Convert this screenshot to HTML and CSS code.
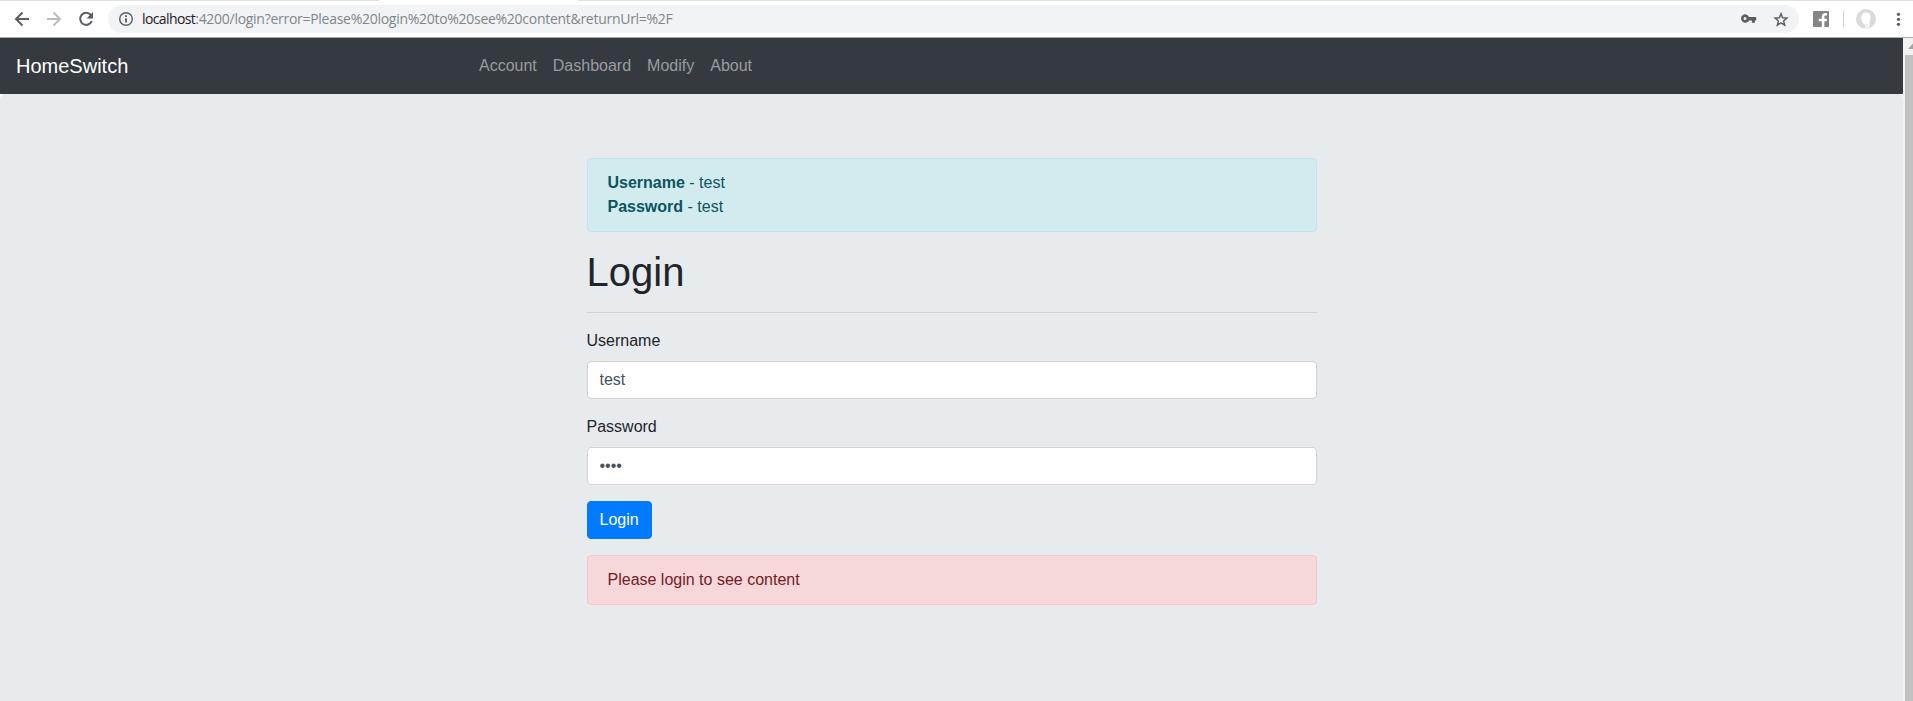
FILE: index.html
```html
<!DOCTYPE html>
<html lang="en">
<head>
<meta charset="utf-8">
<title>HomeSwitch</title>
<link rel="stylesheet" href="styles.css">
</head>
<body>
<header class="toolbar">
  <svg class="tool-icons" width="108" height="37" viewBox="0 0 108 37" fill="none" stroke-width="2">
    <path stroke="#5a5d62" d="M29 19H16.5M22.5 12.5L16 19l6.500 6.500"/>
    <path stroke="#bbbdc0" d="M47 19h12.500M53.500 12.500L60 19l-6.500 6.500"/>
    <path stroke="#5a5d62" d="M90.800 15A6 6 0 1 0 91.800 21"/>
    <path fill="#5a5d62" d="M93 12v6.500h-6.500z"/>
  </svg>
  <div class="address">
    <svg class="info" width="16" height="16" viewBox="0 0 16 16" fill="none" stroke="#5a5d62">
      <circle cx="8" cy="8" r="6.300" stroke-width="1.400"/>
      <path stroke-width="1.800" d="M8 7.200v4.300M8 4.300v1.700"/>
    </svg>
    <div class="url"><span class="host">localhost</span><span class="path">:4200/login?error=Please%20login%20to%20see%20content&amp;returnUrl=%2F</span></div>
    <svg class="address-icons" width="48" height="28" viewBox="0 0 48 28">
      <path fill="#5a5d62" fill-rule="evenodd" d="M4 9.300a4.200 4.200 0 0 1 4 2.700h7.200v3.400h-1.300v2.400h-3v-2.400H8A4.200 4.200 0 1 1 4 9.300zm0 2.700a1.500 1.500 0 1 0 0 3 1.500 1.500 0 0 0 0-3z"/>
      <path fill="none" stroke="#5a5d62" stroke-width="1.400" d="M40 8.700l1.600 4.100 4.300.3-3.300 2.800 1.100 4.300-3.700-2.400-3.700 2.400 1.100-4.300-3.300-2.800 4.300-.3z"/>
    </svg>
  </div>
  <svg class="tool-icons" width="114" height="37" viewBox="0 0 114 37">
    <rect x="14" y="11" width="16" height="16" rx="1" fill="#858585"/>
    <path fill="#fff" d="M22.800 27v-5.700h-3v-2.500h3v-1.900c0-2.900 1.600-4.200 5.200-3.800v2.300c-2-.1-2.600.2-2.600 1.500v1.900H28l-.3 2.500h-2.300V27z"/>
    <path stroke="#cfd1d3" d="M44.500 11v16"/>
    <circle cx="67" cy="19" r="10" fill="#dadada"/>
    <path fill="#fff" d="M67 12.500c3.200 0 4.800 2.100 4.600 5.300-.2 2.700-1.300 4.200-1 5.900.2 1.700-1 4.300-2.600 5.300h-3c1.500-1.400 1.900-3.200 1.300-4.400-2.400-.6-4-3.500-4-6.800 0-3.100 1.500-5.300 4.700-5.300z"/>
    <path fill="#e4eef2" d="M67 23.500c1 1.500.5 4-2 5.500h3l1.500-5z"/>
    <g fill="#5a5d62"><circle cx="99.500" cy="14.300" r="1.600"/><circle cx="99.500" cy="19.300" r="1.600"/><circle cx="99.500" cy="24.300" r="1.600"/></g>
  </svg>
</header>
<div class="viewport">
  <div class="page">
    <nav class="navbar">
      <a class="brand">HomeSwitch</a>
      <div class="nav-links"><a>Account</a><a>Dashboard</a><a>Modify</a><a>About</a></div>
    </nav>
    <main class="jumbotron">
      <div class="content">
        <div class="alert alert-info"><strong>Username</strong> - test<br><strong>Password</strong> - test</div>
        <h1>Login</h1>
        <hr>
        <form>
          <div class="form-group"><label for="user">Username</label><input id="user" type="text" value="test"></div>
          <div class="form-group"><label for="pass">Password</label><input id="pass" type="password" value="test"></div>
          <button class="btn" type="button">Login</button>
        </form>
        <div class="alert alert-danger">Please login to see content</div>
      </div>
    </main>
  </div>
  <div class="scrollbar">
    <svg width="10" height="17" viewBox="0 0 10 17"><path fill="#a3a3a3" d="M5 11l5-5.500V11z"/></svg>
    <div class="thumb"></div>
  </div>
</div>
</body>
</html>
```
FILE: styles.css
```css
* { box-sizing: border-box; }
html, body { height: 100%; }
body {
  margin: 0;
  display: flex;
  flex-direction: column;
  overflow: hidden;
  background: #fff;
  color: #212529;
  font: 16px/24px "Liberation Sans", Arial, sans-serif;
}

.toolbar {
  display: flex;
  flex: none;
  height: 38px;
  padding-top: 1px;
  border-bottom: 1px solid #a9abae;
  background: linear-gradient(90deg, #dee1e6 379px, #fff 379px, #fff 578px, #dee1e6 578px) top / 100% 1px no-repeat #fff;
}
.tool-icons { flex: none; margin-top: -1px; }
.address {
  display: flex;
  align-items: center;
  flex: 1;
  height: 28px;
  margin-top: 4px;
  padding-left: 10px;
  border-radius: 14px;
  background: #f1f3f4;
}
.info { margin-right: 8px; }
.url {
  flex: 1;
  font: 14px/20px "Open Sans", "Noto Sans", sans-serif;
  white-space: nowrap;
}
.host { color: #202124; letter-spacing: -0.6px; }
.path { color: #80868b; letter-spacing: -0.28px; }
.address-icons { margin-right: 10px; }

.viewport { display: flex; flex: 1; min-height: 0; }
.page { display: flex; flex-direction: column; flex: 1; }
.navbar {
  display: flex;
  align-items: center;
  flex: none;
  height: 56px;
  padding: 0 16px;
  background: #343a40;
}
.brand { width: 455px; color: #fff; font-size: 20px; line-height: 30px; }
.nav-links { display: flex; }
.nav-links a { padding: 8px; color: #999c9f; }

.jumbotron {
  flex: 1;
  padding-top: 64px;
  border-radius: 4.800px 4.800px 0 0;
  background: #e7ebee;
}
.content { width: 730px; margin: 0 auto; }
.alert { padding: 12px 20px; border: 1px solid; border-radius: 4px; }
.alert-info { margin-bottom: 16px; color: #0c5460; background: #d1ebef; border-color: #bee5eb; }
.alert-danger { margin-top: 16px; color: #721c24; background: #f6d7da; border-color: #f5c6cb; }
h1 { margin: 0 0 8px; font-size: 40px; font-weight: 400; line-height: 48px; }
hr { margin: 16px 0; border: 0; border-top: 1px solid #cfd3d6; }
.form-group { margin-bottom: 16px; }
label { display: block; margin-bottom: 8px; }
input {
  display: block;
  width: 100%;
  height: 38px;
  padding: 6px 12px;
  border: 1px solid #ced4da;
  border-radius: 4px;
  background: #fff;
  color: #495057;
  font: inherit;
}
.btn {
  display: block;
  height: 38px;
  padding: 6px 12px;
  border: 1px solid #007bff;
  border-radius: 4px;
  background: #007bff;
  color: #fff;
  font: inherit;
}

.scrollbar { display: flex; flex-direction: column; width: 10px; background: #f1f1f1; }
.thumb { flex: 1; margin-left: 2px; background: #c1c1c1; }
```
